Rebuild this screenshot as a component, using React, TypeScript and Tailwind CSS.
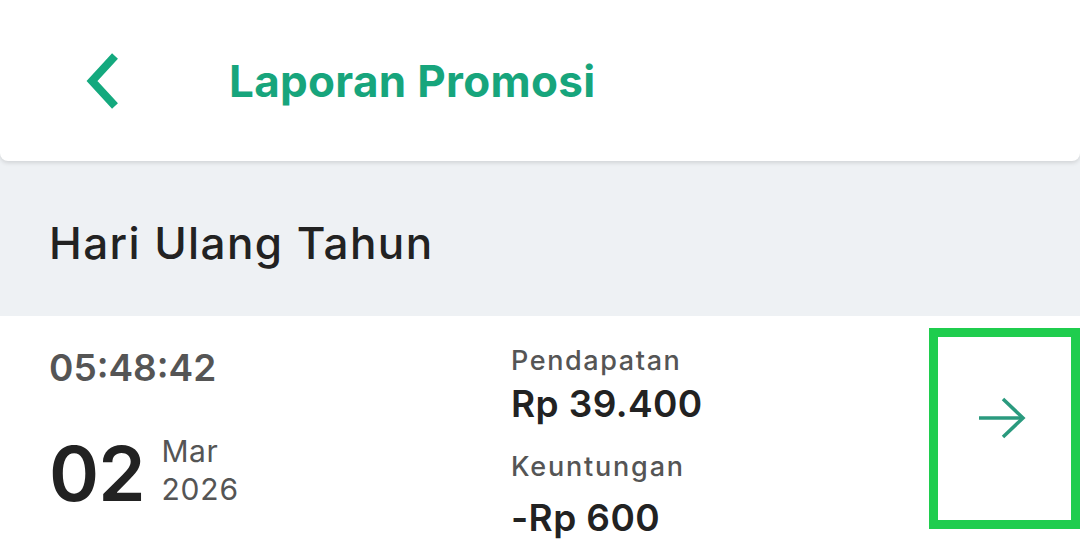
import React from "react";

const font = { fontFamily: "Inter, 'Noto Sans', sans-serif" };

function BackChevron() {
  return (
    <svg width="34" height="56" viewBox="0 0 34 56" fill="none">
      <path d="M29 3 L6 28 L29 53" stroke="#14a97e" strokeWidth="8" strokeLinejoin="miter" />
    </svg>
  );
}

function ArrowIcon() {
  return (
    <svg width="50" height="42" viewBox="0 0 50 42" fill="none">
      <path d="M2 21 H46" stroke="#2a9a7e" strokeWidth="3.5" />
      <path d="M26 2 L46 21 L26 40" stroke="#2a9a7e" strokeWidth="3.5" />
    </svg>
  );
}

export default function App() {
  return (
    <div className="w-[1080px] h-[556px] overflow-hidden bg-[#eef1f4]" style={font}>
      {/* header */}
      <div className="h-[161px] bg-white rounded-b-lg shadow-[0_2px_4px_rgba(0,0,0,0.12)] flex items-center relative z-10">
        <div className="pl-[86px] w-[229px] flex items-center">
          <BackChevron />
        </div>
        <h1 className="text-[44px] font-bold text-[#17a57c] leading-none tracking-[0.3px]">Laporan Promosi</h1>
      </div>

      {/* group title */}
      <div className="h-[155px] flex items-center pl-[49px]">
        <h2 className="text-[44px] font-medium text-[#222] leading-none pt-[8px] tracking-[1.4px]">Hari Ulang Tahun</h2>
      </div>

      {/* row */}
      <div className="bg-white h-[240px] flex">
        <div className="w-[511px] pl-[49px] pt-[33px]">
          <div className="text-[37px] font-semibold text-[#555] leading-none">05:48:42</div>
          <div className="flex items-start mt-[49px] gap-[17px]">
            <div className="text-[76px] font-semibold text-[#222] leading-none tracking-[-1px]">02</div>
            <div className="flex flex-col pt-[1px]">
              <span className="text-[30px] text-[#555] leading-none tracking-[0.5px]">Mar</span>
              <span className="text-[30px] text-[#555] leading-none mt-[8px] tracking-[0.8px]">2026</span>
            </div>
          </div>
        </div>

        <div className="pt-[31px] flex flex-col">
          <span className="text-[27px] font-medium text-[#555] leading-none tracking-[1.6px]">Pendapatan</span>
          <span className="text-[37px] font-semibold text-[#222] leading-none mt-[11px] tracking-[0.4px]">Rp 39.400</span>
          <span className="text-[27px] font-medium text-[#555] leading-none mt-[31px] tracking-[1.8px]">Keuntungan</span>
          <span className="text-[37px] font-semibold text-[#222] leading-none mt-[19px] tracking-[0.4px]">-Rp 600</span>
        </div>

        <div className="ml-auto mt-[12px] w-[151px] h-[201px] border-[9px] border-[#1fcd4e] flex items-center justify-center">
          <div className="mb-[22px] mr-[6px]">
            <ArrowIcon />
          </div>
        </div>
      </div>
    </div>
  );
}
